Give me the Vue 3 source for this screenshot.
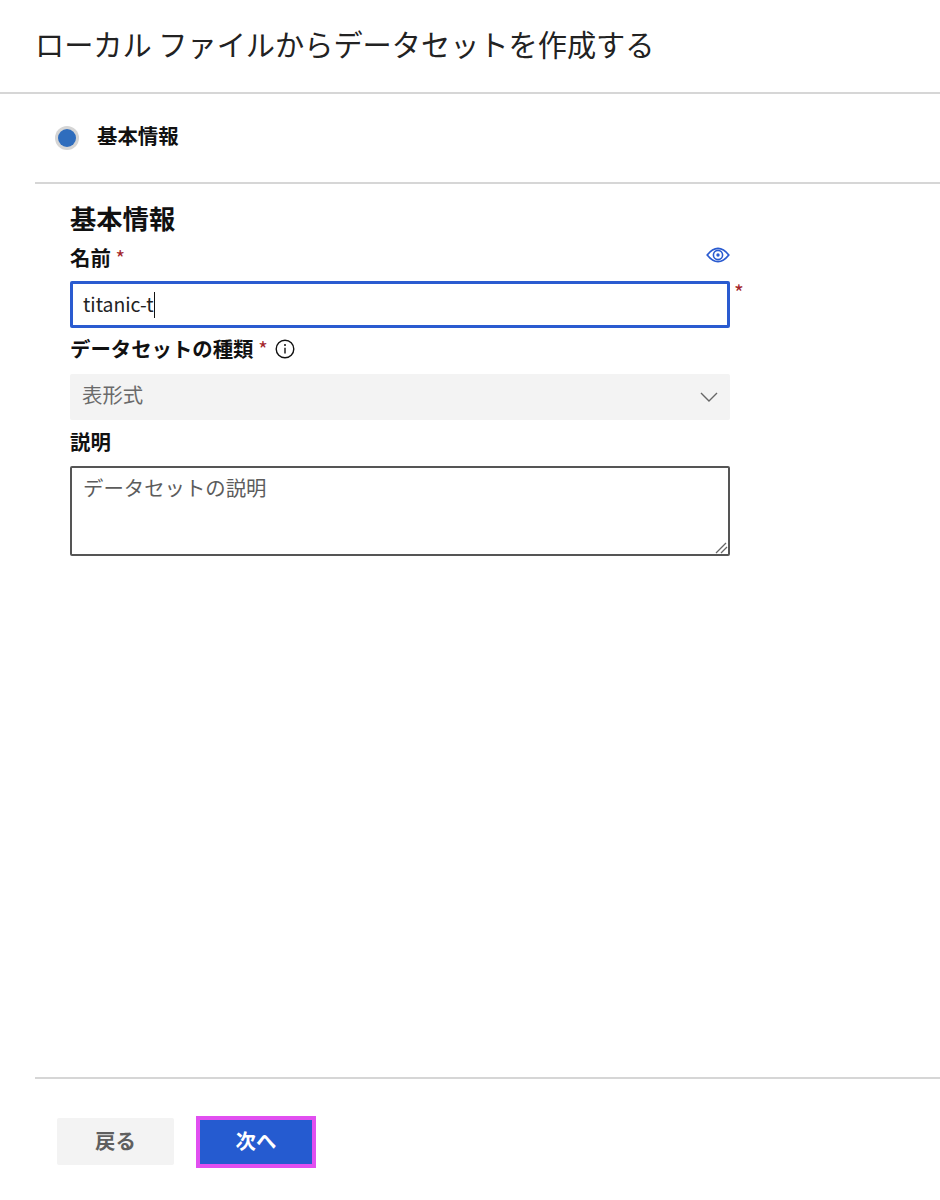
<template>
  <div class="page">
    <header class="page-header">
      <h1 class="page-title">ローカル ファイルからデータセットを作成する</h1>
    </header>

    <div class="stepper">
      <span class="step-dot"></span>
      <span class="step-label">基本情報</span>
    </div>

    <main class="content">
      <form class="form" @submit.prevent>
        <h2 class="form-title">基本情報</h2>

        <div class="label-row name-label">
          <label class="label">名前 <span class="req">*</span></label>
          <svg class="eye" viewBox="0 0 24 16" width="24" height="16" fill="none" stroke="#2a5bd0">
            <path d="M1.2 8 C5 3.2 8.5 1.4 12 1.4 S19 3.2 22.8 8 C19 12.8 15.5 14.6 12 14.6 S5 12.8 1.2 8 Z" stroke-width="1.7" />
            <circle cx="12" cy="8" r="4.6" stroke-width="1.6" />
            <circle cx="12" cy="8" r="1.7" fill="#2a5bd0" stroke="none" />
          </svg>
        </div>
        <div class="input-wrap">
          <div class="input"><span class="input-text">titanic-t</span><span class="caret"></span></div>
          <span class="req side-req">*</span>
        </div>

        <div class="label-row type-label">
          <label class="label">データセットの種類 <span class="req">*</span></label>
          <svg class="info" viewBox="0 0 20 20" width="20" height="20" fill="none" stroke="#111">
            <circle cx="10" cy="10" r="8.8" stroke-width="1.4" />
            <path d="M10 8.8 V14.6" stroke-width="1.4" />
            <circle cx="10" cy="6" r="1" fill="#111" stroke="none" />
          </svg>
        </div>
        <div class="select">
          <span class="select-text">{{ datasetType }}</span>
          <svg viewBox="0 0 18 10" width="18" height="10" fill="none" stroke="#666" stroke-width="1.4">
            <path d="M1 1 L9 9 L17 1" />
          </svg>
        </div>

        <div class="label-row desc-label">
          <label class="label">説明</label>
        </div>
        <div class="textarea">
          データセットの説明
          <svg class="grip" viewBox="0 0 14 14" width="14" height="14" stroke="#666" stroke-width="1.3">
            <path d="M2 13 L12 3 M7 13 L13 7" />
          </svg>
        </div>
      </form>
    </main>

    <footer class="footer">
      <button type="button" class="btn btn-back">戻る</button>
      <button type="button" class="btn btn-next">次へ</button>
    </footer>
  </div>
</template>

<script setup>
const datasetType = '表形式'
</script>

<style>
body {
  background: #fff;
}
</style>

<style scoped>
.page {
  width: 940px;
  height: 1200px;
  display: flex;
  flex-direction: column;
  background: #fff;
  color: #111;
  font-family: "Noto Sans CJK JP", "Noto Sans", sans-serif;
}

.page-header {
  height: 92px;
  padding-left: 35px;
  display: flex;
  align-items: center;
  border-bottom: 2px solid #d6d6d6;
}

.page-title {
  margin: -6px 0 0;
  font-size: 29.2px;
  font-weight: 400;
  line-height: 40px;
  color: #222;
}

.stepper {
  height: 88px;
  margin-left: 35px;
  padding-left: 23px;
  display: flex;
  align-items: center;
  border-bottom: 2px solid #d6d6d6;
}

.step-dot {
  width: 18px;
  height: 18px;
  border-radius: 50%;
  background: #2f6dbd;
  box-shadow: 0 0 0 3px #d5d5d5;
}

.step-label {
  margin-left: 21px;
  margin-top: -6px;
  font-size: 20.4px;
  font-weight: 700;
  line-height: 28px;
}

.content {
  flex: 1;
  padding: 15px 0 0 70px;
}

.form {
  width: 660px;
}

.form-title {
  margin: 0;
  font-size: 26.3px;
  font-weight: 700;
  line-height: 38px;
  color: #111;
}

.label-row {
  display: flex;
  align-items: center;
  height: 28px;
}

.name-label {
  justify-content: space-between;
  margin-top: 7px;
}

.type-label {
  margin-top: 7px;
  gap: 7px;
}

.desc-label {
  margin-top: 8px;
}

.label {
  margin-top: -2px;
  font-size: 20.4px;
  font-weight: 700;
  line-height: 28px;
}

.req {
  color: #a4262c;
  font-weight: 400;
}

.eye {
  margin-top: -7px;
}

.input-wrap {
  position: relative;
  margin-top: 9px;
}

.input {
  height: 47px;
  box-sizing: border-box;
  border: 3px solid #2a5bd0;
  border-radius: 2px;
  padding: 0 10px;
  display: flex;
  align-items: center;
  font-size: 19.4px;
  color: #222;
}

.input-text {
  margin-top: -2px;
}

.caret {
  width: 1px;
  height: 26px;
  background: #111;
}

.side-req {
  position: absolute;
  left: 664px;
  top: -4px;
  font-size: 21px;
}

.select {
  height: 46px;
  margin-top: 11px;
  padding: 0 12px 0 12px;
  display: flex;
  align-items: center;
  justify-content: space-between;
  background: #f3f3f3;
  border-radius: 2px;
  font-size: 20.4px;
  color: #6a6a6a;
}

.select-text {
  margin-top: -7px;
}

.textarea {
  position: relative;
  height: 90px;
  box-sizing: border-box;
  margin-top: 10px;
  padding: 5px 11px;
  border: 2px solid #555;
  border-radius: 2px;
  font-size: 20.4px;
  line-height: 28px;
  color: #5c5c5c;
}

.grip {
  position: absolute;
  right: 0;
  bottom: 0;
}

.footer {
  height: 123px;
  margin-left: 35px;
  padding: 37px 0 0 22px;
  box-sizing: border-box;
  border-top: 2px solid #d6d6d6;
  display: flex;
  align-items: flex-start;
  gap: 22px;
}

.btn {
  font-family: inherit;
  font-size: 20.4px;
  font-weight: 700;
  border-radius: 2px;
}

.btn-back {
  width: 117px;
  height: 47px;
  margin-top: 2px;
  padding: 0 0 3px;
  border: none;
  background: #f3f3f3;
  color: #5f5f5f;
}

.btn-next {
  width: 120px;
  height: 52px;
  padding: 0 0 4px;
  border: 4px solid #e14ff0;
  border-radius: 0;
  background: #255bd0;
  color: #fff;
}
</style>
